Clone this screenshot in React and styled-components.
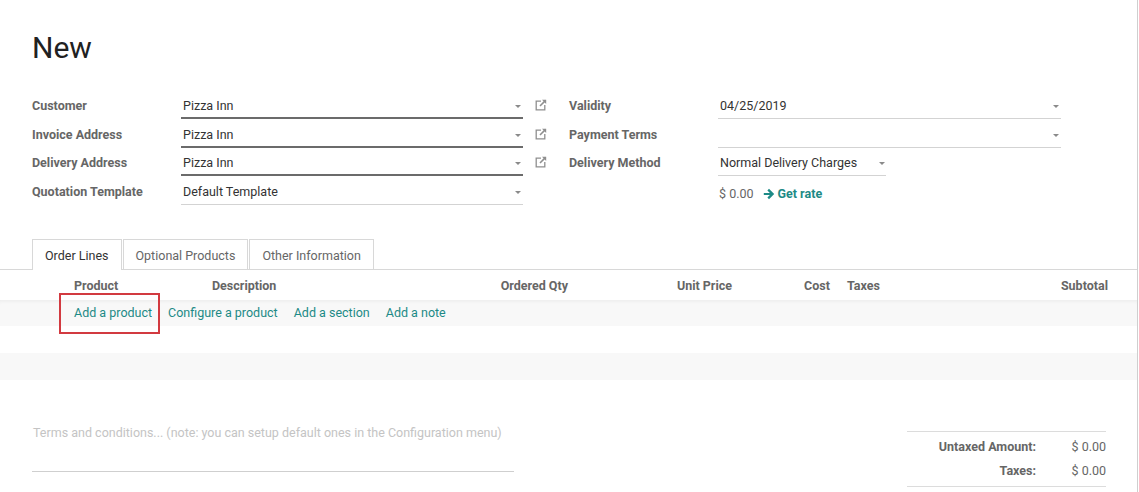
import React from "react";
import styled, { createGlobalStyle } from "styled-components";

const GlobalStyle = createGlobalStyle`
  html, body {
    margin: 0;
    padding: 0;
    background: #fff;
  }
  body {
    font-family: Roboto, "Noto Sans", "Liberation Sans", sans-serif;
    font-size: 12.5px;
    color: #4c4c4c;
    overflow: hidden;
  }
`;

const LINK = "#1d8a86";

const Sheet = styled.div`
  width: 1138px;
  min-height: 492px;
  border-right: 1px solid #cfcfcf;
  box-sizing: border-box;
`;

const Title = styled.h1`
  margin: 0;
  padding: 30px 0 0 32px;
  font-size: 30px;
  line-height: 36px;
  font-weight: 400;
  color: #212121;
`;

const Groups = styled.div`
  display: grid;
  grid-template-columns: 537px 536px;
  margin: 29px 0 0 32px;
`;

const Group = styled.div`
  display: grid;
  grid-template-columns: 149px 1fr;
  grid-auto-rows: 28.7px;
  align-items: start;
`;

const Label = styled.div`
  font-weight: 700;
  color: #666;
  line-height: 22px;
`;

const FieldWrap = styled.div`
  display: flex;
  align-items: flex-start;
`;

const Field = styled.div`
  position: relative;
  width: ${(p) => p.$width || 342}px;
  height: 24px;
  box-sizing: border-box;
  padding-left: 2px;
  line-height: 22px;
  color: #333;
  border-bottom: ${(p) => (p.$required ? "2px solid #6b6b6b" : "1px solid #d3d3d3")};
`;

const Caret = styled.span`
  position: absolute;
  right: ${(p) => p.$right ?? 2}px;
  top: 10px;
  width: 0;
  height: 0;
  border-left: 3px solid transparent;
  border-right: 3px solid transparent;
  border-top: 3px solid #8a8a8a;
`;

const ExtLink = styled.span`
  display: inline-flex;
  margin: 4px 0 0 12px;
  color: #8f8f8f;
`;

const Amount = styled.div`
  display: flex;
  align-items: center;
  gap: 9px;
  line-height: 22px;
  padding: 2px 0 0 1px;
  color: #666;
`;

const RateLink = styled.span`
  display: inline-flex;
  align-items: center;
  gap: 3px;
  color: ${LINK};
  font-weight: 700;
`;

const Tabs = styled.div`
  display: flex;
  margin-top: 29px;
  padding-left: 32px;
  border-bottom: 1px solid #d8d8d8;
`;

const Tab = styled.div`
  height: 30px;
  line-height: 31px;
  padding: 0 12px;
  box-sizing: border-box;
  border: 1px solid #d8d8d8;
  border-bottom: none;
  margin-bottom: -1px;
  margin-right: 1px;
  background: #fff;
  color: ${(p) => (p.$active ? "#333" : "#666")};
  ${(p) => p.$active && "height: 31px;"}
`;

const COLS = "62px 138px 270px 110px 164px 98px 148px 130px 18px";

const HeadRow = styled.div`
  display: grid;
  grid-template-columns: ${COLS};
  height: 30px;
  padding-top: 2px;
  box-sizing: border-box;
  align-items: center;
  font-weight: 700;
  color: #666;
`;

const Th = styled.div`
  text-align: ${(p) => (p.$right ? "right" : "left")};
  padding: ${(p) => (p.$right ? "0 12px 0 0" : `0 0 0 ${p.$pl ?? 12}px`)};
`;

const Row = styled.div`
  height: ${(p) => p.$h || 27}px;
  background: ${(p) => (p.$striped ? "#f8f8f8" : "#fff")};
  ${(p) => p.$shadow && "box-shadow: inset 0 4px 4px -3px rgba(0,0,0,0.06);"}
  display: flex;
  align-items: center;
  padding-left: 74px;
`;

const Links = styled.div`
  display: flex;
  gap: 16px;
`;

const A = styled.span`
  position: relative;
  color: ${LINK};
  ${(p) =>
    p.$marked &&
    `&::after {
      content: "";
      position: absolute;
      left: -15px;
      right: -8px;
      top: -12px;
      bottom: -14px;
      border: 2px solid #d23a40;
    }`}
`;

const Bottom = styled.div`
  display: flex;
  justify-content: space-between;
  align-items: flex-start;
  padding: 0 31px 0 32px;
  margin-top: 39px;
`;

const Terms = styled.div`
  width: 482px;
  height: 53px;
  padding: 3px 0 0 1px;
  box-sizing: border-box;
  line-height: 22px;
  white-space: nowrap;
  color: #c4c4c4;
  border-bottom: 1px solid #cfcfcf;
`;

const Totals = styled.div`
  width: 199px;
  margin-top: 12px;
  border-top: 1px solid #dcdcdc;
`;

const TotalRow = styled.div`
  display: grid;
  grid-template-columns: 1fr 70px;
  height: 24px;
  align-items: center;
  ${(p) => p.$first && "height: 27px; padding-top: 2px; box-sizing: border-box;"}
`;

const TotalsRule = styled.div`
  margin-top: 3px;
  border-top: 1px solid #dcdcdc;
`;

const TotalLabel = styled.div`
  text-align: right;
  font-weight: 700;
  color: #666;
`;

const TotalValue = styled.div`
  text-align: right;
  color: #666;
`;

const ExternalIcon = () => (
  <svg width="12" height="12" viewBox="0 0 12 12" fill="none" stroke="currentColor" strokeWidth="1.3">
    <path d="M6 2.2H1.2v8.6h8.6V6" />
    <path d="M5 7l5.6-5.6" strokeWidth="1.6" />
    <path d="M7 0.8h4.2V5z" fill="currentColor" stroke="none" />
  </svg>
);

const ArrowRight = () => (
  <svg width="12" height="12" viewBox="0 0 12 12" fill="currentColor">
    <path d="M6 0.8l5.2 5.2L6 11.2 4.4 9.6l2.5-2.5H0.8V4.9h6.1L4.4 2.4z" />
  </svg>
);

const leftFields = [
  { label: "Customer", value: "Pizza Inn", required: true, link: true },
  { label: "Invoice Address", value: "Pizza Inn", required: true, link: true },
  { label: "Delivery Address", value: "Pizza Inn", required: true, link: true },
  { label: "Quotation Template", value: "Default Template" },
];

export default function App() {
  return (
    <>
      <GlobalStyle />
      <Sheet>
        <Title>New</Title>

        <Groups>
          <Group>
            {leftFields.map((f) => (
              <React.Fragment key={f.label}>
                <Label>{f.label}</Label>
                <FieldWrap>
                  <Field $required={f.required}>
                    {f.value}
                    <Caret />
                  </Field>
                  {f.link && (
                    <ExtLink>
                      <ExternalIcon />
                    </ExtLink>
                  )}
                </FieldWrap>
              </React.Fragment>
            ))}
          </Group>

          <Group>
            <Label>Validity</Label>
            <FieldWrap>
              <Field $width={343}>
                04/25/2019
                <Caret />
              </Field>
            </FieldWrap>
            <Label>Payment Terms</Label>
            <FieldWrap>
              <Field $width={343}>
                <Caret />
              </Field>
            </FieldWrap>
            <Label>Delivery Method</Label>
            <FieldWrap>
              <Field $width={168}>
                Normal Delivery Charges
                <Caret $right={1} />
              </Field>
            </FieldWrap>
            <div />
            <Amount>
              <span>$ 0.00</span>
              <RateLink>
                <ArrowRight />
                Get rate
              </RateLink>
            </Amount>
          </Group>
        </Groups>

        <Tabs>
          <Tab $active>Order Lines</Tab>
          <Tab>Optional Products</Tab>
          <Tab>Other Information</Tab>
        </Tabs>

        <HeadRow>
          <div />
          <Th>Product</Th>
          <Th>Description</Th>
          <Th $right>Ordered Qty</Th>
          <Th $right>Unit Price</Th>
          <Th $right>Cost</Th>
          <Th $pl={5}>Taxes</Th>
          <Th $right>Subtotal</Th>
          <div />
        </HeadRow>
        <Row $striped $shadow $h={26}>
          <Links>
            <A $marked>Add a product</A>
            <A>Configure a product</A>
            <A>Add a section</A>
            <A>Add a note</A>
          </Links>
        </Row>
        <Row $h={27} />
        <Row $striped />

        <Bottom>
          <Terms>Terms and conditions... (note: you can setup default ones in the Configuration menu)</Terms>
          <Totals>
            <TotalRow $first>
              <TotalLabel>Untaxed Amount:</TotalLabel>
              <TotalValue>$ 0.00</TotalValue>
            </TotalRow>
            <TotalRow>
              <TotalLabel>Taxes:</TotalLabel>
              <TotalValue>$ 0.00</TotalValue>
            </TotalRow>
            <TotalsRule />
          </Totals>
        </Bottom>
      </Sheet>
    </>
  );
}
